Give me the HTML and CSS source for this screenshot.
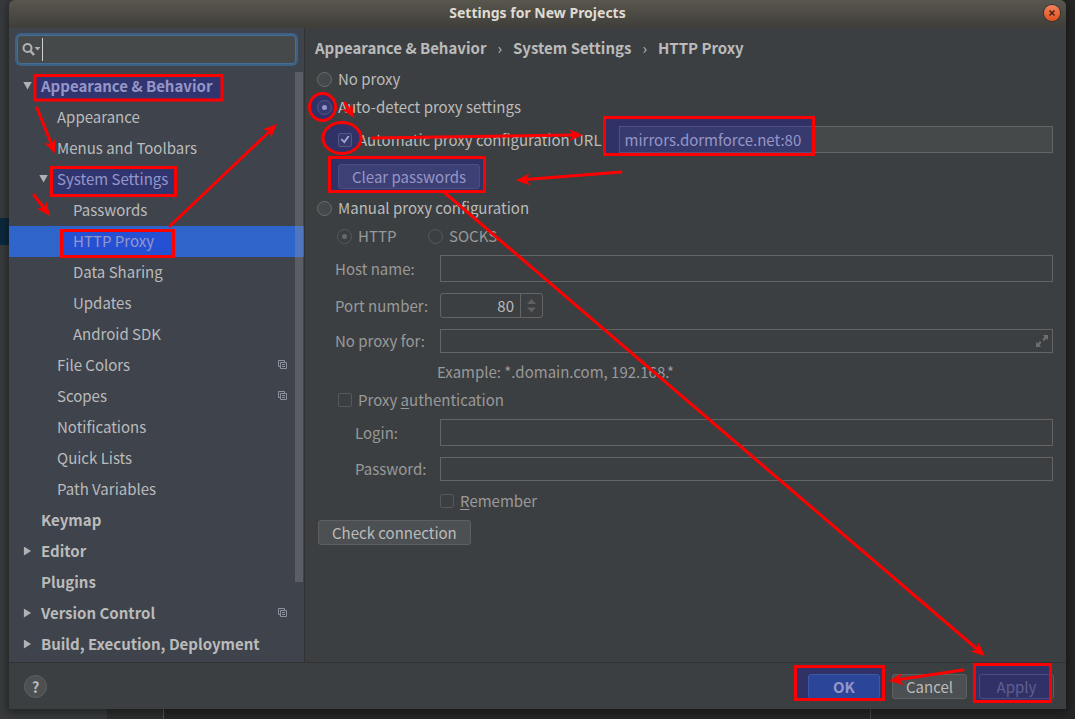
FILE: index.html
```html
<!DOCTYPE html>
<html lang="en">
<head>
<meta charset="utf-8">
<title>Settings for New Projects</title>
<link rel="stylesheet" href="styles.css">
</head>
<body>
<div class="desktop">
  <div class="gutter"><span class="gutter-mark"></span></div>
  <div class="ide-edge"></div>
</div>
<svg class="defs" width="0" height="0" aria-hidden="true">
  <symbol id="copy" viewBox="0 0 10 10"><path d="M2.500 6.500H.5V.5H6.500V2.500M2.500 2.500H8.500V8.500H2.500ZM4 4.500H7M4 6.500H7" fill="none" stroke="#8a939b"/></symbol>
</svg>
<div class="dialog">
  <header class="titlebar">
    <h1 class="title">Settings for New Projects</h1>
    <button class="close" aria-label="Close"><svg width="8" height="8" viewBox="0 0 8 8"><path d="M1.500 1.500L6.500 6.500M6.500 1.500L1.500 6.500" stroke="#4a2317" stroke-width="1.500"/></svg></button>
  </header>
  <div class="body">
    <aside class="sidebar">
      <div class="search">
        <svg width="20" height="16" viewBox="0 0 20 16" aria-hidden="true"><circle cx="5.500" cy="6" r="4" fill="none" stroke="#afb1b3" stroke-width="2"/><path d="M8.500 9L12 13" stroke="#afb1b3" stroke-width="2.500"/><path d="M12.500 5H18.500L15.500 8.500Z" fill="#afb1b3"/></svg>
        <span class="caret"></span>
        <input class="search-input" type="text" aria-label="Search settings">
      </div>
      <div class="tree-area">
        <ul class="tree">
          <li class="node top open">Appearance &amp; Behavior</li>
          <li class="node mid">Appearance</li>
          <li class="node mid">Menus and Toolbars</li>
          <li class="node mid open">System Settings</li>
          <li class="node deep">Passwords</li>
          <li class="node deep selected">HTTP Proxy</li>
          <li class="node deep">Data Sharing</li>
          <li class="node deep">Updates</li>
          <li class="node deep">Android SDK</li>
          <li class="node mid">File Colors<svg class="copy"><use href="#copy"/></svg></li>
          <li class="node mid">Scopes<svg class="copy"><use href="#copy"/></svg></li>
          <li class="node mid">Notifications</li>
          <li class="node mid">Quick Lists</li>
          <li class="node mid">Path Variables</li>
          <li class="node top">Keymap</li>
          <li class="node top closed">Editor</li>
          <li class="node top">Plugins</li>
          <li class="node top closed">Version Control<svg class="copy"><use href="#copy"/></svg></li>
          <li class="node top closed">Build, Execution, Deployment</li>
        </ul>
        <div class="scrollbar"></div>
      </div>
    </aside>
    <main class="content">
      <nav class="crumbs"><span>Appearance &amp; Behavior</span><span class="sep">›</span><span>System Settings</span><span class="sep">›</span><span>HTTP Proxy</span></nav>
      <div class="row"><label class="choice"><input type="radio" name="mode">No proxy</label></div>
      <div class="row"><label class="choice"><input type="radio" name="mode" checked>Auto-detect proxy settings</label></div>
      <div class="row tall in1 url-row">
        <label class="choice"><input type="checkbox" checked>Automatic proxy configuration URL</label>
        <input class="field enabled" type="text" value="mirrors.dormforce.net:80" aria-label="Configuration URL">
      </div>
      <div class="row medium in1"><button class="btn">Clear passwords</button></div>
      <div class="row"><label class="choice"><input type="radio" name="mode">Manual proxy configuration</label></div>
      <div class="row kinds">
        <label class="choice dim"><input type="radio" name="kind" checked disabled>HTTP</label>
        <label class="choice dim"><input type="radio" name="kind" disabled>SOCKS</label>
      </div>
      <div class="row tall form"><label for="host">Host name:</label><input id="host" class="field" type="text" disabled></div>
      <div class="row tall form"><label for="port">Port number:</label>
        <div class="spinner"><input id="port" type="text" value="80" disabled><span class="steps"><svg width="9" height="14" viewBox="0 0 9 14"><path d="M0 5H9L4.500 0ZM0 8.500H9L4.500 13.500Z" fill="#5e6062"/></svg></span></div>
      </div>
      <div class="row snug form"><label for="skip">No proxy for:</label>
        <div class="expandable"><input id="skip" class="field short" type="text" disabled><svg class="expand" width="12" height="12" viewBox="0 0 12 12"><path d="M7 0H12V5L10.500 3.500L8 6L6.500 4.500L8.500 2ZM0 7L1.500 8.500L4 6L5.500 7.500L3.500 10L5 12H0Z" fill="#6c6e70"/></svg></div>
      </div>
      <div class="row example">Example: *.domain.com, 192.168.*</div>
      <div class="row in1"><label class="choice dim"><input type="checkbox" disabled><span>Proxy <u>a</u>uthentication</span></label></div>
      <div class="row tall form sub"><label for="login">Login:</label><input id="login" class="field" type="text" disabled></div>
      <div class="row medium form sub"><label for="pass">Password:</label><input id="pass" class="field short" type="password" disabled></div>
      <div class="row remember"><label class="choice dim"><input type="checkbox" disabled><span><u>R</u>emember</span></label></div>
      <div class="row snug check-row"><button class="btn">Check connection</button></div>
    </main>
  </div>
  <footer class="footer">
    <button class="help" aria-label="Help">?</button>
    <button class="btn primary">OK</button>
    <button class="btn">Cancel</button>
    <button class="btn" disabled>Apply</button>
  </footer>
</div>
<svg class="marks" width="1075" height="719" viewBox="0 0 1075 719" aria-hidden="true">
  <defs><marker id="head" markerUnits="userSpaceOnUse" markerWidth="16" markerHeight="14" refX="14" refY="6" orient="auto"><path d="M14 6L0 0L4 6L0 12Z" fill="#f00"/></marker></defs>
  <g class="boxes">
    <rect x="35" y="75.500" width="187" height="24.500"/>
    <rect x="51.500" y="167.500" width="124" height="28"/>
    <rect x="61.500" y="230.500" width="112" height="26"/>
    <ellipse cx="322.500" cy="107" rx="13" ry="13.500"/>
    <ellipse cx="342" cy="138" rx="19" ry="15.500"/>
    <rect x="329.500" y="157.500" width="155" height="34"/>
    <rect x="604.500" y="117.500" width="209" height="37"/>
    <rect x="795.500" y="666.500" width="88" height="33"/>
    <rect x="974.500" y="664.500" width="76" height="37"/>
  </g>
  <g fill="none" stroke="#f00" stroke-width="3" stroke-linecap="round">
    <path d="M37 108L51 143"/>
    <path d="M34 195L43 207"/>
    <path d="M170 226L270 131"/>
    <path d="M345 103L348 108"/>
    <path d="M372 138L573 135"/>
    <path d="M621 172L526 179.500"/>
    <path d="M445 193L977 649"/>
    <path d="M963 670L899 679.500"/>
  </g>
  <g class="heads">
    <path d="M37 108L55 153.500"/>
    <path d="M34 195L50 216"/>
    <path d="M170 226L277 124"/>
    <path d="M345 103L354 118"/>
    <path d="M372 138L583 135"/>
    <path d="M621 172L516 180.500"/>
    <path d="M445 193L985 656"/>
    <path d="M963 670L889 681"/>
  </g>
</svg>
</body>
</html>
```

FILE: styles.css
```css
* { box-sizing: border-box; }
body {
  margin: 0;
  min-height: 100vh;
  padding: 0 9px 10px;
  display: flex;
  background: #262626;
  color: #bbbbbb;
  font: 15px/24px "Noto Sans CJK SC", "Noto Sans", sans-serif;
}
input, button { font: inherit; color: inherit; margin: 0; }
.defs { position: absolute; }

/* IDE window behind the dialog */
.desktop { position: absolute; inset: 0; display: flex; overflow: hidden; }
.gutter { width: 107px; background: #383b3d; padding-top: 218px; }
.gutter-mark { display: block; height: 27px; background: #0d293e; }
.ide-edge { width: 57px; background: #2d2e2f; border-right: 1px solid #555; }
.desktop::after { content: ""; width: 706px; border-right: 1px solid #4a4a4a; }

.dialog {
  position: relative;
  flex: 1;
  display: flex;
  flex-direction: column;
  background: #3c3f41;
  border-radius: 6px 6px 0 0;
  box-shadow: 0 2px 10px 2px rgba(0, 0, 0, .4);
}
.titlebar {
  display: flex;
  align-items: center;
  height: 28px;
  padding: 0 6px 2px 22px;
  border-radius: 6px 6px 0 0;
  background: linear-gradient(#59564e, #3f3e39);
}
.title {
  flex: 1;
  margin: 0;
  text-align: center;
  font: bold 14px/20px "Noto Sans", sans-serif;
  color: #dfdbd2;
}
.close {
  display: grid;
  place-items: center;
  width: 16px;
  height: 16px;
  padding: 0;
  border: 0;
  border-radius: 50%;
  background: linear-gradient(#f4815c, #e2521f);
  box-shadow: 0 0 0 1px #36332e;
}

.body { flex: 1; display: flex; }
.sidebar {
  width: 296px;
  padding-top: 7px;
  background: #3e434c;
  border-right: 1px solid #323232;
}
.search {
  display: flex;
  align-items: center;
  height: 29px;
  margin: 0 8px 7px;
  padding-left: 4px;
  background: #45494a;
  border: 1px solid #466d94;
  border-radius: 4px;
  box-shadow: 0 0 0 2px #3d6185;
}
.caret { width: 1px; height: 23px; background: #d0d0d0; }
.search-input { flex: 1; min-width: 0; border: 0; outline: 0; background: none; }
.tree-area { position: relative; display: flex; }
.tree { flex: 1; min-width: 0; margin: 0; padding: 0; list-style: none; }
.node { display: flex; align-items: center; height: 31px; padding: 0 16px 1px 0; }
.node::before { content: ""; flex: none; width: 9px; height: 9px; margin-right: 9px; }
.top { padding-left: 14px; font-weight: bold; }
.mid { padding-left: 30px; }
.deep { padding-left: 46px; }
.selected { background: #2f65ca; }
.open::before { background: #afb1b3; clip-path: polygon(0 0, 100% 0, 50% 90%); }
.closed::before { background: #afb1b3; clip-path: polygon(10% 0, 90% 50%, 10% 100%); }
.copy { width: 10px; height: 10px; margin-left: auto; }
.scrollbar {
  position: absolute;
  top: 1px;
  right: 1px;
  bottom: 78px;
  width: 8px;
  background: rgba(166, 166, 166, .28);
}

.content { flex: 1; min-width: 0; padding: 3px 13px 0 10px; }
.crumbs { display: flex; align-items: center; gap: 11px; height: 34px; padding-bottom: 1px; font-weight: bold; }
.sep { font-weight: normal; }
.row { display: flex; align-items: center; height: 28px; padding-left: 2px; }
.tall { height: 37px; }
.medium { height: 36px; }
.snug { height: 34px; }
.in1 { padding-left: 23px; }
.url-row { gap: 17px; }
.choice { display: flex; align-items: center; gap: 6px; flex: none; }
.dim, .form, .example { color: #999999; }
.kinds { padding-left: 22px; }
.kinds .choice { width: 91px; }

input[type="radio"], input[type="checkbox"] {
  appearance: none;
  display: grid;
  place-items: center;
  width: 14px;
  height: 14px;
  border: 1px solid #6b6b6b;
  background: #43494a;
}
input[type="radio"] { width: 15px; height: 15px; border-radius: 50%; }
input[type="checkbox"] { border-radius: 2px; }
input[type="radio"]:checked::before {
  content: "";
  width: 5px;
  height: 5px;
  border-radius: 50%;
  background: #bbbbbb;
}
input[type="checkbox"]:checked::before {
  content: "";
  width: 9px;
  height: 8px;
  background: #cccccc;
  clip-path: polygon(0 50%, 18% 38%, 40% 66%, 82% 0, 100% 12%, 44% 100%);
}
input[type="radio"]:disabled, input[type="checkbox"]:disabled { background: none; border-color: #56595b; }
input[type="radio"]:disabled::before { background: #66696b; }

.field {
  flex: 1;
  min-width: 0;
  height: 27px;
  padding: 0 5px;
  border: 1px solid #646464;
  background: none;
}
.short { height: 24px; }
.enabled { background: #45494a; }
.form { padding-left: 20px; }
.form > label { width: 105px; flex: none; }
.sub { padding-left: 40px; }
.sub > label { width: 85px; }
.spinner {
  display: flex;
  width: 103px;
  height: 25px;
  border: 1px solid #646464;
  border-radius: 3px;
}
.spinner input {
  flex: 1;
  min-width: 0;
  padding: 0 6px;
  border: 0;
  border-right: 1px solid #646464;
  background: none;
  color: #bbbbbb;
  text-align: right;
}
.steps { display: grid; place-items: center; width: 21px; }
.expandable { position: relative; flex: 1; display: flex; }
.expand { position: absolute; right: 5px; top: 6px; }
.example { padding-left: 122px; }
.remember { padding-left: 125px; }
.check-row { padding-left: 3px; }
u { text-underline-offset: 2px; }

.btn {
  height: 25px;
  min-width: 75px;
  padding: 1px 13px 0;
  border: 1px solid #5e6060;
  border-radius: 3px;
  background: #4c5052;
  line-height: 22px;
}
.btn:disabled { background: none; color: #777777; }
.primary { min-width: 72px; background: #365880; border-color: #4c708c; font-weight: bold; }
.footer {
  display: flex;
  align-items: center;
  gap: 12px;
  height: 47px;
  padding: 0 12px 0 15px;
  border-top: 1px solid #323232;
}
.help {
  width: 23px;
  height: 23px;
  margin-right: auto;
  padding: 0;
  border: 1px solid #5e6060;
  border-radius: 50%;
  background: #4c5052;
  font-weight: bold;
  line-height: 21px;
}

/* walkthrough boxes and arrows over the dialog */
.marks { position: absolute; left: 0; top: 0; pointer-events: none; }
.boxes { fill: rgba(0, 0, 255, .2); stroke: #f00; stroke-width: 3; }
.heads path { marker-end: url(#head); }
```
